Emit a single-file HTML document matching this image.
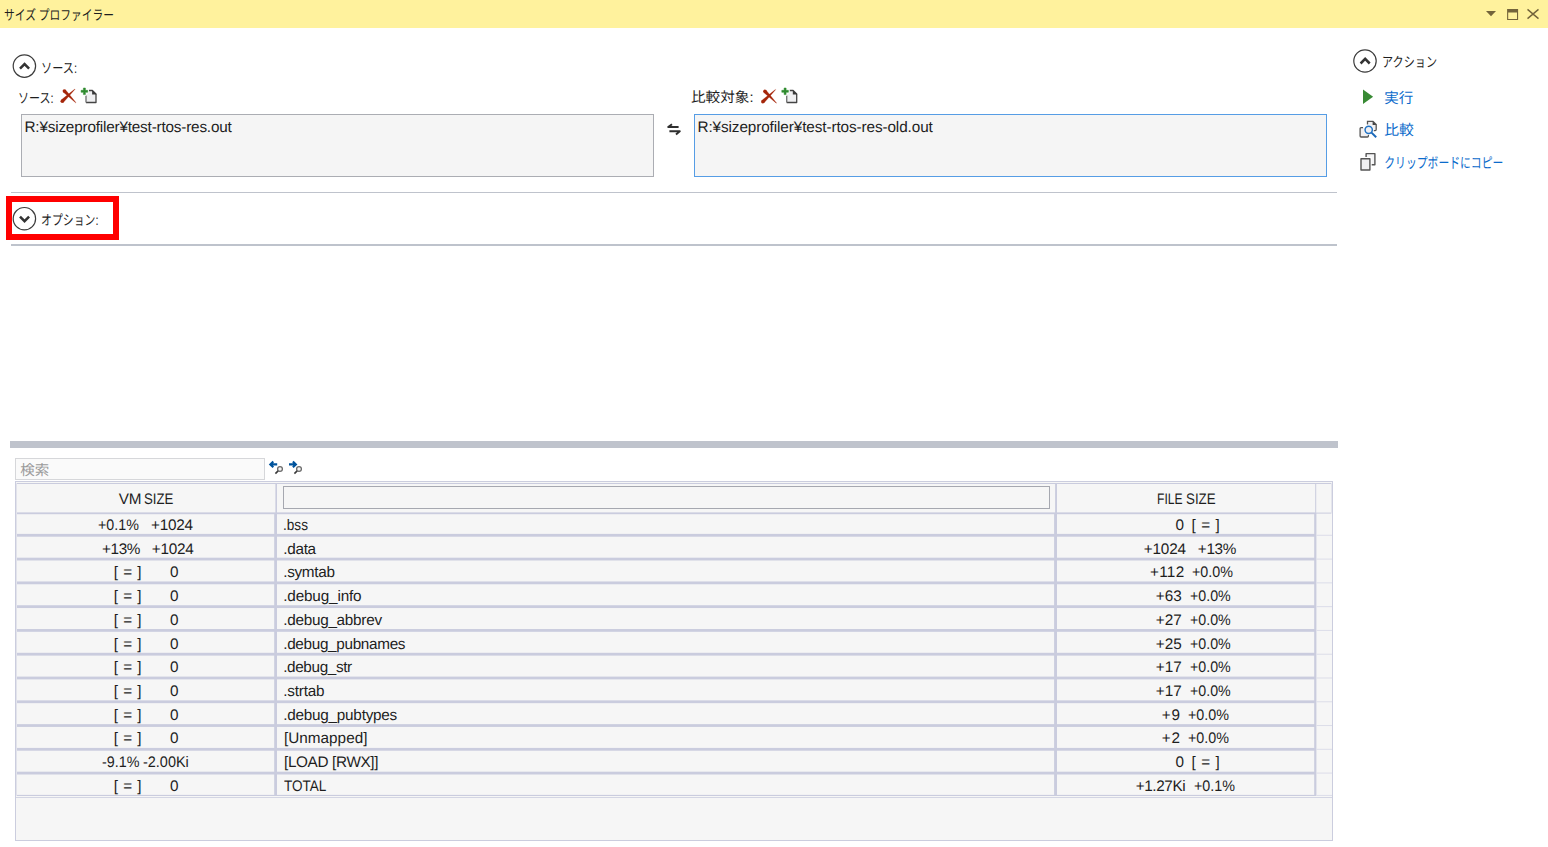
<!DOCTYPE html>
<html lang="ja">
<head>
<meta charset="utf-8">
<title>サイズ プロファイラー</title>
<style>
html,body{margin:0;padding:0}
body{width:1548px;height:847px;position:relative;overflow:hidden;background:#fff;
 font-family:"Liberation Sans",sans-serif;font-size:15.3px;text-rendering:geometricPrecision;color:#1e1e1e;line-height:20px}
.abs,.jp,.ic,.t,.grp{position:absolute}
.grp{left:0;top:0;width:0;height:0}
.jp,.ic{display:block;overflow:visible}
.jp text{font-family:"Liberation Sans","Noto Sans CJK JP",sans-serif}
#titlebar{left:0;top:0;width:1548px;height:28px;background:#fff29d}
.box{box-sizing:border-box;background:#f5f5f5;border:1px solid #abadb3}
.box.focus{border-color:#569de5}
.box .t{left:2.5px;top:3px;white-space:pre}
.sep{background:#bfc3cc;height:1px;left:11px;width:1326px}
#redmark{left:6px;top:196px;width:101px;height:32px;border:6px solid #ff0000}
#splitter{left:10px;top:441px;width:1328px;height:7px;background:#bfc3cc}
#search{left:15px;top:458px;width:250px;height:22px;box-sizing:border-box;border:1px solid #d6d7da;background:#fafafa}
#grid{left:15px;top:481px;width:1318px;height:360px;box-sizing:border-box;border:1px solid #cbcdde;background:#f6f6f6}
.t{white-space:pre;line-height:20px;height:20px;transform-origin:0 0}
#filter{left:283px;top:486px;width:767px;height:23px;box-sizing:border-box;border:1px solid #a6a8b0;background:#f6f6f6}
</style>
</head>
<body>

<header class="grp" id="toolwindow-title">
<div id="titlebar" class="abs"></div>
<svg class="jp" role="img" aria-label="サイズ プロファイラー" style="left:3px;top:5px" width="113" height="18" viewBox="3 5 113 18"><text x="4" y="19.6" font-size="14" fill="#1e1e1e" textLength="110" lengthAdjust="spacingAndGlyphs" xml:space="preserve">サイズ プロファイラー</text></svg>
<svg class="ic" role="img" aria-label="window buttons" style="left:1484px;top:8px" width="56" height="14" viewBox="1484 8 56 14"><path d="M1486 11 H1496 L1491 16.2 Z" fill="#73643b"/><path d="M1507.1 8.9 H1518.1 V20 H1507.1 Z M1508.2 12.6 V18.9 H1517 V12.6 Z" fill="#73643b" fill-rule="evenodd"/><path d="M1527.5 9.4 L1538.5 18.6 M1538.5 9.4 L1527.5 18.6" stroke="#73643b" stroke-width="1.4" fill="none"/></svg>
</header>
<section class="grp" id="sources">
<svg class="ic" role="img" aria-label="collapse" style="left:11px;top:53px" width="27" height="27" viewBox="11 53 27 27"><circle cx="24.4" cy="66.1" r="11.2" fill="#fff" stroke="#3c3c3c" stroke-width="1.2"/><polyline points="20.00,68.60 24.55,64.00 29.10,68.60" fill="none" stroke="#333" stroke-width="2.5" stroke-linejoin="miter"/></svg>
<svg class="jp" role="img" aria-label="ソース:" style="left:40px;top:59px" width="38" height="16" viewBox="40 59 38 16"><text x="41" y="72.6" font-size="14" fill="#1e1e1e" textLength="36" lengthAdjust="spacingAndGlyphs">ソース:</text></svg>
<svg class="jp" role="img" aria-label="ソース:" style="left:17px;top:89px" width="37" height="16" viewBox="17 89 37 16"><text x="18" y="102.6" font-size="14" fill="#1e1e1e" textLength="35.5" lengthAdjust="spacingAndGlyphs">ソース:</text></svg>
<svg class="ic" role="img" aria-label="remove" style="left:59px;top:88px" width="19" height="18" viewBox="59 88 19 18"><path d="M63.34 102.49 L75.00 89.31 L74.80 89.09 L61.06 100.11 Z M63.12 92.05 L75.69 102.80 L75.91 102.60 L65.48 89.75 Z" fill="#a5260a" stroke="#a5260a" stroke-width="0.3"/><circle cx="62.20" cy="101.30" r="1.7" fill="#a5260a"/><circle cx="64.30" cy="90.90" r="1.7" fill="#a5260a"/></svg>
<svg class="ic" role="img" aria-label="add" style="left:78px;top:85px" width="21" height="20" viewBox="78 85 21 20"><path d="M86.00 90.50 H92.40 L96.00 94.00 V102.50 H86.00 Z" fill="#efeff1"/><path d="M86.00 102.50 H96.00 V94.00 L92.40 90.50 H88.90" fill="none" stroke="#444" stroke-width="1.3" stroke-linejoin="round"/><path d="M86.00 95.50 V102.50" fill="none" stroke="#777" stroke-width="1.4"/><path d="M92.10 90.00 L96.60 94.40 H92.10 Z" fill="#3a3a3a"/><path d="M83.40 88.00 H85.40 V90.30 H87.70 V92.30 H85.40 V94.60 H83.40 V92.30 H81.10 V90.30 H83.40 Z" fill="#fff" stroke="#fff" stroke-width="2.2" stroke-linejoin="round"/><path d="M83.40 88.00 H85.40 V90.30 H87.70 V92.30 H85.40 V94.60 H83.40 V92.30 H81.10 V90.30 H83.40 Z" fill="#2f8a2f" stroke="#2f8a2f" stroke-width="0.5" stroke-linejoin="round"/></svg>
<div class="abs box" style="left:21px;top:114px;width:633px;height:63px"><span class="t" style="letter-spacing:-.19px">R:¥sizeprofiler¥test-rtos-res.out</span></div>
<svg class="ic" role="img" aria-label="swap" style="left:665px;top:122px" width="18" height="15" viewBox="665 122 18 15"><path d="M678.6 127.05 H668.2 L672 124.2" fill="none" stroke="#2f2f2f" stroke-width="1.9" stroke-linejoin="round"/><path d="M669.4 131.25 H679.8 L676 134.5" fill="none" stroke="#2f2f2f" stroke-width="1.9" stroke-linejoin="round"/></svg>
<svg class="jp" role="img" aria-label="比較対象:" style="left:690px;top:89px" width="64" height="16" viewBox="690 89 64 16"><text x="691" y="101.8" font-size="14" fill="#1e1e1e" textLength="62.5" lengthAdjust="spacingAndGlyphs">比較対象:</text></svg>
<svg class="ic" role="img" aria-label="remove" style="left:759px;top:88px" width="19" height="18" viewBox="759 88 19 18"><path d="M763.94 102.89 L775.60 89.71 L775.40 89.49 L761.66 100.51 Z M763.72 92.45 L776.29 103.20 L776.51 103.00 L766.08 90.15 Z" fill="#a5260a" stroke="#a5260a" stroke-width="0.3"/><circle cx="762.80" cy="101.70" r="1.7" fill="#a5260a"/><circle cx="764.90" cy="91.30" r="1.7" fill="#a5260a"/></svg>
<svg class="ic" role="img" aria-label="add" style="left:779px;top:85px" width="21" height="20" viewBox="779 85 21 20"><path d="M786.70 90.50 H793.10 L796.70 94.00 V102.50 H786.70 Z" fill="#efeff1"/><path d="M786.70 102.50 H796.70 V94.00 L793.10 90.50 H789.60" fill="none" stroke="#444" stroke-width="1.3" stroke-linejoin="round"/><path d="M786.70 95.50 V102.50" fill="none" stroke="#777" stroke-width="1.4"/><path d="M792.80 90.00 L797.30 94.40 H792.80 Z" fill="#3a3a3a"/><path d="M784.10 88.00 H786.10 V90.30 H788.40 V92.30 H786.10 V94.60 H784.10 V92.30 H781.80 V90.30 H784.10 Z" fill="#fff" stroke="#fff" stroke-width="2.2" stroke-linejoin="round"/><path d="M784.10 88.00 H786.10 V90.30 H788.40 V92.30 H786.10 V94.60 H784.10 V92.30 H781.80 V90.30 H784.10 Z" fill="#2f8a2f" stroke="#2f8a2f" stroke-width="0.5" stroke-linejoin="round"/></svg>
<div class="abs box focus" style="left:694px;top:114px;width:633px;height:63px"><span class="t" style="letter-spacing:-.1px">R:¥sizeprofiler¥test-rtos-res-old.out</span></div>
<div class="abs sep" style="top:192px"></div>
</section>
<section class="grp" id="options">
<div id="redmark" class="abs"></div>
<svg class="ic" role="img" aria-label="expand" style="left:11px;top:205px" width="27" height="27" viewBox="11 205 27 27"><circle cx="24.4" cy="218.7" r="11.2" fill="#fff" stroke="#3c3c3c" stroke-width="1.2"/><polyline points="20.00,216.60 24.55,221.20 29.10,216.60" fill="none" stroke="#333" stroke-width="2.5" stroke-linejoin="miter"/></svg>
<svg class="jp" role="img" aria-label="オプション:" style="left:40px;top:211px" width="60" height="16" viewBox="40 211 60 16"><text x="41" y="224.8" font-size="14" fill="#1e1e1e" textLength="57.5" lengthAdjust="spacingAndGlyphs">オプション:</text></svg>
<div class="abs sep" style="top:244px;height:2px;background:#bec3cc"></div>
</section>
<aside class="grp" id="actions">
<svg class="ic" role="img" aria-label="collapse" style="left:1352px;top:48px" width="27" height="27" viewBox="1352 48 27 27"><circle cx="1365.0" cy="61.0" r="11.2" fill="#fff" stroke="#3c3c3c" stroke-width="1.2"/><polyline points="1360.60,63.50 1365.15,58.90 1369.70,63.50" fill="none" stroke="#333" stroke-width="2.5" stroke-linejoin="miter"/></svg>
<svg class="jp" role="img" aria-label="アクション" style="left:1381px;top:54px" width="57" height="15" viewBox="1381 54 57 15"><text x="1382" y="67" font-size="14" fill="#1e1e1e" textLength="55" lengthAdjust="spacingAndGlyphs">アクション</text></svg>
<svg class="ic" role="img" aria-label="run" style="left:1362px;top:88px" width="13" height="17" viewBox="1362 88 13 17"><path d="M1363 89.4 L1373.1 96.7 L1363 104.1 Z" fill="#388a34"/></svg>
<svg class="jp" role="img" aria-label="実行" style="left:1383px;top:90px" width="32" height="16" viewBox="1383 90 32 16"><text x="1384.3" y="103" font-size="14.5" fill="#0b6bcb" textLength="29" lengthAdjust="spacingAndGlyphs">実行</text></svg>
<svg class="ic" role="img" aria-label="compare" style="left:1358px;top:119px" width="21" height="20" viewBox="1358 119 21 20"><path d="M1367.5 121.4 H1373 L1376.2 124.5 V129.6 Q1376.2 130.6 1375.2 130.6 H1367.5 Z" fill="#f0eff1"/><path d="M1367.5 124.6 V121.4 H1373 L1376.2 124.5 V129.6 Q1376.2 130.6 1375.2 130.6 H1373.6" fill="none" stroke="#555" stroke-width="1.3"/><path d="M1372.6 121.2 L1376.5 125 H1372.6 Z" fill="#444"/><path d="M1361.1 127.6 H1367.4 V137 H1361.1 Q1360.1 137 1360.1 136 V128.6 Q1360.1 127.6 1361.1 127.6 Z" fill="#f0eff1"/><path d="M1363 127.6 H1361.1 Q1360.1 127.6 1360.1 128.6 V136 Q1360.1 137 1361.1 137 H1367.4 Q1368.4 137 1368.4 136 V134.6" fill="none" stroke="#555" stroke-width="1.3"/><circle cx="1368.7" cy="129.8" r="5" fill="#fff"/><path d="M1371.4 132.5 L1376.3 137.3" stroke="#fff" stroke-width="3.4" fill="none"/><circle cx="1368.7" cy="129.8" r="3.65" fill="#efeff3" stroke="#2272c3" stroke-width="1.5"/><path d="M1371.5 132.6 L1376.2 137.2" stroke="#1b68b8" stroke-width="2" fill="none"/></svg>
<svg class="jp" role="img" aria-label="比較" style="left:1383px;top:121px" width="32" height="16" viewBox="1383 121 32 16"><text x="1384.3" y="134.6" font-size="14.5" fill="#0b6bcb" textLength="29.5" lengthAdjust="spacingAndGlyphs">比較</text></svg>
<svg class="ic" role="img" aria-label="copy" style="left:1359px;top:151px" width="18" height="21" viewBox="1359 151 18 21"><path d="M1366.1 153.6 H1374.9 V164.8 H1366.1 Z" fill="#f5f5f6" stroke="#555" stroke-width="1.4" stroke-linejoin="round"/><path d="M1361 158.7 H1369.9 V170 H1361 Z" fill="#fff" stroke="#fff" stroke-width="3.6"/><path d="M1361 158.7 H1369.9 V170 H1361 Z" fill="#f0f0f2" stroke="#555" stroke-width="1.4" stroke-linejoin="round"/></svg>
<svg class="jp" role="img" aria-label="クリップボードにコピー" style="left:1383px;top:154px" width="121" height="17" viewBox="1383 154 121 17"><text x="1384.3" y="167.8" font-size="14.5" fill="#0b6bcb" textLength="119" lengthAdjust="spacingAndGlyphs">クリップボードにコピー</text></svg>
</aside>
<section class="grp" id="results">
<div id="splitter" class="abs"></div>
<div id="search" class="abs"></div>
<svg class="jp" role="img" aria-label="検索" style="left:19px;top:462px" width="31" height="16" viewBox="19 462 31 16"><text x="20.3" y="474.8" font-size="14.2" fill="#9a9a9a" textLength="29" lengthAdjust="spacingAndGlyphs">検索</text></svg>
<svg class="ic" role="img" aria-label="find previous" style="left:268px;top:459px" width="17" height="17" viewBox="268 459 17 17"><circle cx="280.0" cy="469" r="2.4" fill="#f4f4f4" stroke="#6b6b6b" stroke-width="1.3"/><path d="M278.1 470.9 L275.4 473.6" stroke="#3a3a3a" stroke-width="1.6" fill="none"/><path d="M273.3 461.5 L270.3 464.4 L273.3 467.3 M270.7 464.4 H277.2" fill="none" stroke="#00539c" stroke-width="2.1"/></svg>
<svg class="ic" role="img" aria-label="find next" style="left:288px;top:459px" width="17" height="17" viewBox="288 459 17 17"><circle cx="299.0" cy="469" r="2.4" fill="#f4f4f4" stroke="#6b6b6b" stroke-width="1.3"/><path d="M297.1 470.9 L294.4 473.6" stroke="#3a3a3a" stroke-width="1.6" fill="none"/><path d="M292.9 461.5 L295.9 464.4 L292.9 467.3 M295.5 464.4 H289.0" fill="none" stroke="#00539c" stroke-width="2.1"/></svg>
<div id="grid" class="abs"></div>
<svg id="cells" class="abs" style="left:15px;top:481px" width="1318" height="360" viewBox="15 481 1318 360"><rect x="16.55" y="483.00" width="1314.85" height="313.00" fill="#caccde"/><rect x="17" y="484.00" width="258.40" height="28.40" fill="#f6f6f6"/><rect x="277" y="484.00" width="778.10" height="28.40" fill="#f6f6f6"/><rect x="1057" y="484.00" width="258.20" height="28.40" fill="#f6f6f6"/><rect x="1316.2" y="484.00" width="14.80" height="28.60" fill="#f6f6f6"/><rect x="1316.4" y="513.60" width="15.60" height="283.00" fill="#f6f6f6"/><rect x="17" y="514.20" width="257.20" height="19.70" fill="#f6f6f6"/><rect x="277" y="514.20" width="777.10" height="19.70" fill="#f6f6f6"/><rect x="1057" y="514.20" width="257.20" height="19.70" fill="#f6f6f6"/><rect x="17" y="536.70" width="257.20" height="20.98" fill="#f6f6f6"/><rect x="277" y="536.70" width="777.10" height="20.98" fill="#f6f6f6"/><rect x="1057" y="536.70" width="257.20" height="20.98" fill="#f6f6f6"/><rect x="17" y="560.48" width="257.20" height="20.98" fill="#f6f6f6"/><rect x="277" y="560.48" width="777.10" height="20.98" fill="#f6f6f6"/><rect x="1057" y="560.48" width="257.20" height="20.98" fill="#f6f6f6"/><rect x="17" y="584.26" width="257.20" height="20.98" fill="#f6f6f6"/><rect x="277" y="584.26" width="777.10" height="20.98" fill="#f6f6f6"/><rect x="1057" y="584.26" width="257.20" height="20.98" fill="#f6f6f6"/><rect x="17" y="608.04" width="257.20" height="20.98" fill="#f6f6f6"/><rect x="277" y="608.04" width="777.10" height="20.98" fill="#f6f6f6"/><rect x="1057" y="608.04" width="257.20" height="20.98" fill="#f6f6f6"/><rect x="17" y="631.82" width="257.20" height="20.98" fill="#f6f6f6"/><rect x="277" y="631.82" width="777.10" height="20.98" fill="#f6f6f6"/><rect x="1057" y="631.82" width="257.20" height="20.98" fill="#f6f6f6"/><rect x="17" y="655.60" width="257.20" height="20.98" fill="#f6f6f6"/><rect x="277" y="655.60" width="777.10" height="20.98" fill="#f6f6f6"/><rect x="1057" y="655.60" width="257.20" height="20.98" fill="#f6f6f6"/><rect x="17" y="679.38" width="257.20" height="20.98" fill="#f6f6f6"/><rect x="277" y="679.38" width="777.10" height="20.98" fill="#f6f6f6"/><rect x="1057" y="679.38" width="257.20" height="20.98" fill="#f6f6f6"/><rect x="17" y="703.16" width="257.20" height="20.98" fill="#f6f6f6"/><rect x="277" y="703.16" width="777.10" height="20.98" fill="#f6f6f6"/><rect x="1057" y="703.16" width="257.20" height="20.98" fill="#f6f6f6"/><rect x="17" y="726.94" width="257.20" height="20.98" fill="#f6f6f6"/><rect x="277" y="726.94" width="777.10" height="20.98" fill="#f6f6f6"/><rect x="1057" y="726.94" width="257.20" height="20.98" fill="#f6f6f6"/><rect x="17" y="750.72" width="257.20" height="20.98" fill="#f6f6f6"/><rect x="277" y="750.72" width="777.10" height="20.98" fill="#f6f6f6"/><rect x="1057" y="750.72" width="257.20" height="20.98" fill="#f6f6f6"/><rect x="17" y="774.50" width="257.20" height="20.40" fill="#f6f6f6"/><rect x="277" y="774.50" width="777.10" height="20.40" fill="#f6f6f6"/><rect x="1057" y="774.50" width="257.20" height="20.40" fill="#f6f6f6"/><rect x="1316.4" y="534.80" width="15.60" height="1.00" fill="#dcdde9"/><rect x="1316.4" y="558.58" width="15.60" height="1.00" fill="#dcdde9"/><rect x="1316.4" y="582.36" width="15.60" height="1.00" fill="#dcdde9"/><rect x="1316.4" y="606.14" width="15.60" height="1.00" fill="#dcdde9"/><rect x="1316.4" y="629.92" width="15.60" height="1.00" fill="#dcdde9"/><rect x="1316.4" y="653.70" width="15.60" height="1.00" fill="#dcdde9"/><rect x="1316.4" y="677.48" width="15.60" height="1.00" fill="#dcdde9"/><rect x="1316.4" y="701.26" width="15.60" height="1.00" fill="#dcdde9"/><rect x="1316.4" y="725.04" width="15.60" height="1.00" fill="#dcdde9"/><rect x="1316.4" y="748.82" width="15.60" height="1.00" fill="#dcdde9"/><rect x="1316.4" y="772.60" width="15.60" height="1.00" fill="#dcdde9"/><rect x="1316.4" y="794.90" width="15.60" height="1.00" fill="#dcdde9"/><rect x="16" y="797.00" width="1316.00" height="1.00" fill="#d3d5e3"/></svg>
<div id="filter" class="abs"></div>
<div class="grp" id="gridtext" role="table">
<div role="row"><span class="t" style="left:118.85px;top:489.90px;letter-spacing:-0.25px">VM</span><span class="t" style="left:144.34px;top:489.90px;transform:scaleX(0.864)">SIZE</span><span class="t" style="left:1156.62px;top:489.90px;transform:scaleX(0.792)">FILE</span><span class="t" style="left:1186.13px;top:489.90px;transform:scaleX(0.871)">SIZE</span></div>
<div role="row"><span class="t" style="left:98.45px;top:516.00px;transform:scaleX(0.932)">+0.1%</span><span class="t" style="left:150.96px;top:516.00px;letter-spacing:-0.22px">+1024</span><span class="t" style="left:283.37px;top:516.00px;transform:scaleX(0.890)">.bss</span><span class="t" style="left:1175.58px;top:516.00px">0</span><span class="t" style="left:1191.60px;top:516.00px;letter-spacing:0.53px">[ = ]</span></div>
<div role="row"><span class="t" style="left:102.06px;top:539.72px;letter-spacing:-0.43px">+13%</span><span class="t" style="left:151.86px;top:539.72px;letter-spacing:-0.29px">+1024</span><span class="t" style="left:283.23px;top:539.72px;letter-spacing:-0.28px">.data</span><span class="t" style="left:1143.76px;top:539.72px;letter-spacing:-0.19px">+1024</span><span class="t" style="left:1197.86px;top:539.72px;letter-spacing:-0.37px">+13%</span></div>
<div role="row"><span class="t" style="left:113.80px;top:563.44px;letter-spacing:0.45px">[ = ]</span><span class="t" style="left:169.88px;top:563.44px">0</span><span class="t" style="left:283.23px;top:563.44px;letter-spacing:-0.31px">.symtab</span><span class="t" style="left:1149.96px;top:563.44px;letter-spacing:0.30px">+112</span><span class="t" style="left:1192.25px;top:563.44px;transform:scaleX(0.935)">+0.0%</span></div>
<div role="row"><span class="t" style="left:113.80px;top:587.16px;letter-spacing:0.45px">[ = ]</span><span class="t" style="left:169.88px;top:587.16px">0</span><span class="t" style="left:283.23px;top:587.16px;letter-spacing:-0.16px">.debug_info</span><span class="t" style="left:1155.66px;top:587.16px;letter-spacing:0.07px">+63</span><span class="t" style="left:1190.05px;top:587.16px;transform:scaleX(0.930)">+0.0%</span></div>
<div role="row"><span class="t" style="left:113.80px;top:610.88px;letter-spacing:0.45px">[ = ]</span><span class="t" style="left:169.88px;top:610.88px">0</span><span class="t" style="left:283.23px;top:610.88px;letter-spacing:-0.27px">.debug_abbrev</span><span class="t" style="left:1155.66px;top:610.88px;letter-spacing:0.13px">+27</span><span class="t" style="left:1190.05px;top:610.88px;transform:scaleX(0.930)">+0.0%</span></div>
<div role="row"><span class="t" style="left:113.80px;top:634.60px;letter-spacing:0.45px">[ = ]</span><span class="t" style="left:169.88px;top:634.60px">0</span><span class="t" style="left:283.23px;top:634.60px;letter-spacing:-0.32px">.debug_pubnames</span><span class="t" style="left:1155.66px;top:634.60px;letter-spacing:0.04px">+25</span><span class="t" style="left:1190.05px;top:634.60px;transform:scaleX(0.930)">+0.0%</span></div>
<div role="row"><span class="t" style="left:113.80px;top:658.32px;letter-spacing:0.45px">[ = ]</span><span class="t" style="left:169.88px;top:658.32px">0</span><span class="t" style="left:283.23px;top:658.32px;letter-spacing:-0.37px">.debug_str</span><span class="t" style="left:1155.66px;top:658.32px;letter-spacing:0.13px">+17</span><span class="t" style="left:1190.05px;top:658.32px;transform:scaleX(0.930)">+0.0%</span></div>
<div role="row"><span class="t" style="left:113.80px;top:682.04px;letter-spacing:0.45px">[ = ]</span><span class="t" style="left:169.88px;top:682.04px">0</span><span class="t" style="left:283.23px;top:682.04px;letter-spacing:-0.19px">.strtab</span><span class="t" style="left:1155.66px;top:682.04px;letter-spacing:0.13px">+17</span><span class="t" style="left:1190.05px;top:682.04px;transform:scaleX(0.930)">+0.0%</span></div>
<div role="row"><span class="t" style="left:113.80px;top:705.76px;letter-spacing:0.45px">[ = ]</span><span class="t" style="left:169.88px;top:705.76px">0</span><span class="t" style="left:283.23px;top:705.76px;letter-spacing:-0.24px">.debug_pubtypes</span><span class="t" style="left:1161.66px;top:705.76px;letter-spacing:0.84px">+9</span><span class="t" style="left:1188.04px;top:705.76px;transform:scaleX(0.937)">+0.0%</span></div>
<div role="row"><span class="t" style="left:113.80px;top:729.48px;letter-spacing:0.45px">[ = ]</span><span class="t" style="left:169.88px;top:729.48px">0</span><span class="t" style="left:284.00px;top:729.48px;letter-spacing:0.01px">[Unmapped]</span><span class="t" style="left:1161.66px;top:729.48px;letter-spacing:0.84px">+2</span><span class="t" style="left:1188.04px;top:729.48px;transform:scaleX(0.937)">+0.0%</span></div>
<div role="row"><span class="t" style="left:101.80px;top:753.20px;transform:scaleX(0.937)">-9.1%</span><span class="t" style="left:143.09px;top:753.20px;transform:scaleX(0.944)">-2.00Ki</span><span class="t" style="left:284.00px;top:753.20px;letter-spacing:-0.35px">[LOAD [RWX]]</span><span class="t" style="left:1175.58px;top:753.20px">0</span><span class="t" style="left:1191.60px;top:753.20px;letter-spacing:0.53px">[ = ]</span></div>
<div role="row"><span class="t" style="left:113.80px;top:776.92px;letter-spacing:0.45px">[ = ]</span><span class="t" style="left:169.88px;top:776.92px">0</span><span class="t" style="left:284.11px;top:776.92px;transform:scaleX(0.884)">TOTAL</span><span class="t" style="left:1135.66px;top:776.92px;letter-spacing:-0.38px">+1.27Ki</span><span class="t" style="left:1194.24px;top:776.92px;transform:scaleX(0.937)">+0.1%</span></div>
</div>
</section>

</body>
</html>
